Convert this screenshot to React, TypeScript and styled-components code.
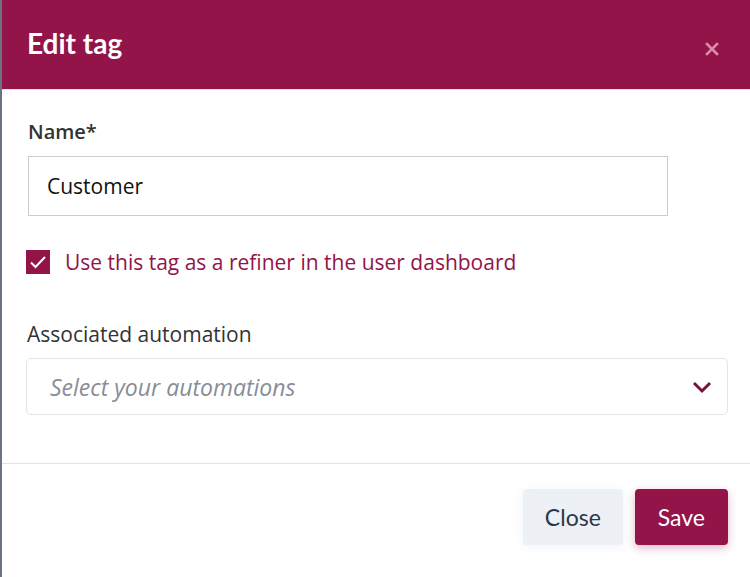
import React from "react";
import styled, { createGlobalStyle } from "styled-components";

const Global = createGlobalStyle`
  html, body { margin: 0; padding: 0; }
  body { background: #6b7280; font-family: "Open Sans", "Liberation Sans", sans-serif; }
  * { box-sizing: border-box; }
`;

const Modal = styled.div`
  margin-left: 2px;
  height: 577px;
  background: #ffffff;
  display: flex;
  flex-direction: column;
`;

const Header = styled.div`
  height: 90px;
  background: #921448;
  border-bottom: 1px solid #e3e3e3;
  display: flex;
  align-items: center;
  justify-content: space-between;
  padding: 0 30px 0 25px;
`;

const Title = styled.h1`
  margin: 0 0 4px 0;
  font-family: "Lato", "Open Sans", sans-serif;
  font-weight: 700;
  font-size: 28px;
  color: #ffffff;
`;

const CloseX = styled.button`
  border: 0;
  background: none;
  padding: 0;
  margin-top: 8px;
  width: 16px;
  height: 16px;
  display: flex;
  align-items: center;
  justify-content: center;
  cursor: pointer;
`;

const Body = styled.div`
  padding: 28px 22px 48px 24px;
  border-bottom: 1px solid #e3e3e3;
  display: flex;
  flex-direction: column;
`;

const Label = styled.label<{ $weight?: number }>`
  font-size: ${(p) => (p.$weight ? 20 : 21)}px;
  line-height: 28px;
  font-weight: ${(p) => p.$weight ?? 400};
  color: #333333;
  margin-left: ${(p) => (p.$weight ? 2 : 1)}px;
`;

const TextInput = styled.div`
  margin: 10px 0 0 2px;
  width: 640px;
  height: 60px;
  border: 1px solid #cccccc;
  display: flex;
  align-items: center;
  padding-left: 18px;
  font-size: 21px;
  color: #111111;
`;

const CheckRow = styled.div`
  margin-top: 32px;
  height: 28px;
  display: flex;
  align-items: center;
  gap: 15px;
`;

const Box = styled.span`
  width: 24px;
  height: 24px;
  background: #921448;
  display: flex;
  align-items: center;
  justify-content: center;
`;

const CheckText = styled.span`
  font-size: 21px;
  color: #921448;
`;

const Section = styled.div`
  margin-top: 44px;
  display: flex;
  flex-direction: column;
`;

const Select = styled.div`
  margin-top: 10px;
  height: 57px;
  border: 1px solid #e2e4ea;
  border-radius: 5px;
  display: flex;
  align-items: center;
  justify-content: space-between;
  padding: 0 14px 0 23px;
`;

const Placeholder = styled.span`
  font-size: 23px;
  font-style: italic;
  color: #888d96;
`;

const Footer = styled.div`
  display: flex;
  justify-content: flex-end;
  gap: 12px;
  padding: 25px 22px 0 0;
`;

const Button = styled.button<{ $primary?: boolean }>`
  height: 56px;
  border: 0;
  border-radius: 4px;
  padding: 0 ${(p) => (p.$primary ? 23 : 22)}px;
  font-family: "Lato", "Open Sans", sans-serif;
  font-size: 23px;
  background: ${(p) => (p.$primary ? "#921448" : "#edf0f5")};
  color: ${(p) => (p.$primary ? "#ffffff" : "#2d3748")};
  box-shadow: ${(p) =>
    p.$primary ? "0 3px 8px rgba(146,20,72,0.3)" : "0 2px 10px rgba(200,210,230,0.25)"};
  cursor: pointer;
`;

export default function App() {
  return (
    <>
      <Global />
      <Modal>
        <Header>
          <Title>Edit tag</Title>
          <CloseX aria-label="Close">
            <svg width="14" height="14" viewBox="0 0 14 14">
              <path d="M2 2 L12 12 M12 2 L2 12" stroke="#d88cab" strokeWidth="2.6" strokeLinecap="square" />
            </svg>
          </CloseX>
        </Header>
        <Body>
          <Label $weight={600}>Name*</Label>
          <TextInput>Customer</TextInput>
          <CheckRow>
            <Box>
              <svg width="18" height="14" viewBox="0 0 18 14">
                <path d="M2 7.5 L6.5 12 L16 2" fill="none" stroke="#ffffff" strokeWidth="2" />
              </svg>
            </Box>
            <CheckText>Use this tag as a refiner in the user dashboard</CheckText>
          </CheckRow>
          <Section>
            <Label>Associated automation</Label>
            <Select>
              <Placeholder>Select your automations</Placeholder>
              <svg width="22" height="14" viewBox="0 0 22 14">
                <path d="M3 3 L11 11 L19 3" fill="none" stroke="#7a1240" strokeWidth="3" />
              </svg>
            </Select>
          </Section>
        </Body>
        <Footer>
          <Button>Close</Button>
          <Button $primary>Save</Button>
        </Footer>
      </Modal>
    </>
  );
}
